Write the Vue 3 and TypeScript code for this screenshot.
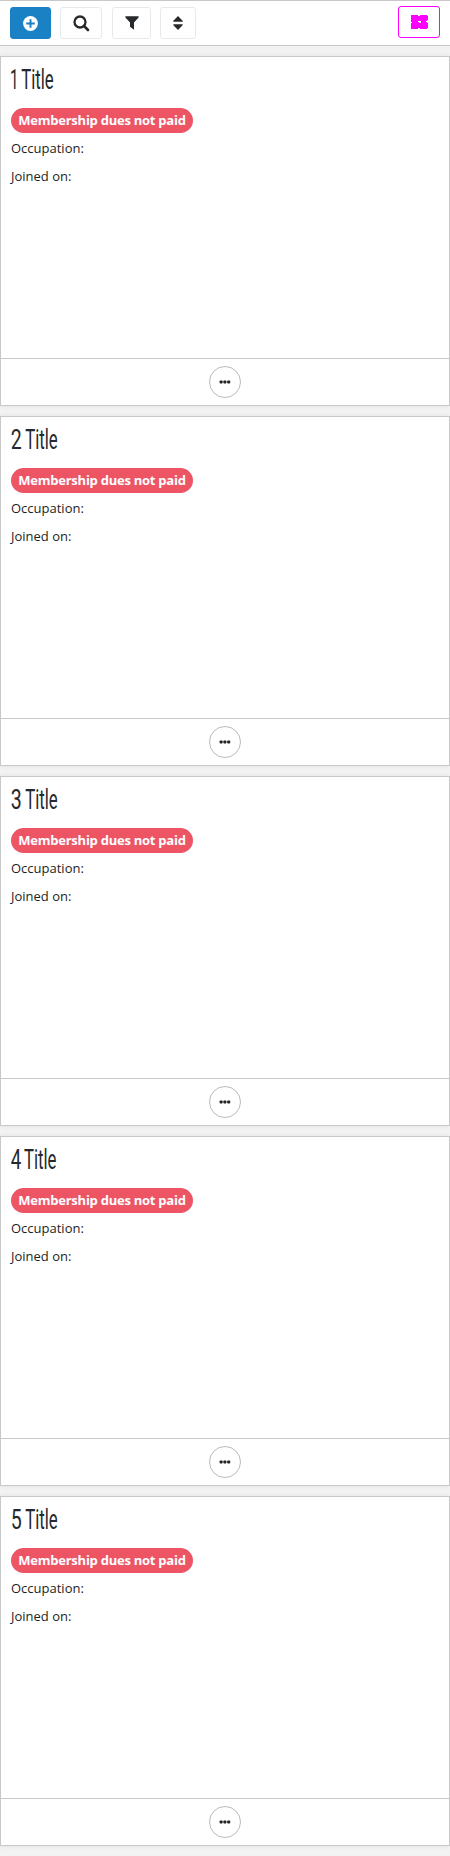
<script setup lang="ts">
interface Card {
  id: number
  digitX: number
  digitWidth: number
  wordX: number
}

const cards: Card[] = [
  { id: 1, digitX: -1, digitWidth: 8.5, wordX: 10.2 },
  { id: 2, digitX: -0.3, digitWidth: 11, wordX: 14.2 },
  { id: 3, digitX: -0.3, digitWidth: 11, wordX: 14.2 },
  { id: 4, digitX: -0.3, digitWidth: 10.5, wordX: 13 },
  { id: 5, digitX: -0.3, digitWidth: 11, wordX: 14.2 },
]
</script>

<template>
  <div class="page">
    <header class="toolbar">
      <button class="btn add" aria-label="Add">
        <svg width="15" height="15" viewBox="0 0 15 15">
          <circle cx="7.5" cy="7.5" r="7.4" fill="#fff" />
          <path d="M7.5 3.2v8.6M3.2 7.5h8.6" stroke="#1b81c5" stroke-width="2" />
        </svg>
      </button>
      <button class="btn search" aria-label="Search">
        <svg width="17" height="17" viewBox="0 0 17 17" fill="none" stroke="#27292a">
          <circle cx="7" cy="7" r="5.5" stroke-width="2.3" />
          <path d="M11 11l4 4" stroke-width="2.6" stroke-linecap="round" />
        </svg>
      </button>
      <button class="btn filter" aria-label="Filter">
        <svg width="14" height="14" viewBox="0 0 14 14">
          <path d="M.4 .3h13.2v1.3L9 6.4v7.3L5 10.7V6.4L.4 1.6z" fill="#27292a" />
        </svg>
      </button>
      <button class="btn sort" aria-label="Sort">
        <svg width="10" height="14" viewBox="0 0 10 14">
          <path d="M5 0l4.6 4.8q.6 1-.5 1H.9q-1.1 0-.5-1zM5 14L.4 9.2q-.6-1 .5-1h8.2q1.1 0 .5 1z" fill="#27292a" />
        </svg>
      </button>
      <button class="btn view" aria-label="Change view">
        <svg width="18" height="14" viewBox="-1 0 18 14" shape-rendering="crispEdges">
          <path
            fill="#f0f"
            fill-rule="evenodd"
            d="M0 0h7v1h2V0h7v1h1v4h-1v1h-1v1h1v1h1v5h-1v1H9v-1H7v1H0V8h1V7H0zM7 6v1h1v1h2V6z"
          />
        </svg>
      </button>
    </header>

    <main class="cards">
      <article v-for="card in cards" :key="card.id" class="card">
        <div class="body">
          <svg class="title" width="60" height="36" role="heading">
            <text :x="card.digitX" y="27" :textLength="card.digitWidth" lengthAdjust="spacingAndGlyphs">{{ card.id }}</text>
            <text :x="card.wordX" y="27" textLength="32.5" lengthAdjust="spacingAndGlyphs">Title</text>
          </svg>
          <div class="badge">Membership dues not paid</div>
          <p class="field">Occupation:</p>
          <p class="field">Joined on:</p>
        </div>
        <footer class="footer">
          <button class="more" aria-label="More">
            <svg width="12" height="4" viewBox="0 0 12 4" fill="#202224">
              <rect x=".6" y=".5" width="3" height="3" rx=".8" />
              <rect x="4.4" y=".5" width="3" height="3" rx=".8" />
              <rect x="8.2" y=".5" width="3" height="3" rx=".8" />
            </svg>
          </button>
        </footer>
      </article>
    </main>
  </div>
</template>

<style>
body {
  background: #f2f2f2;
}
</style>

<style scoped>
.page {
  height: 1856px;
  background: #f2f2f2;
  color: #1c1f22;
  font-family: "Open Sans", sans-serif;
  font-size: 13px;
  overflow: hidden;
}

.page * {
  box-sizing: border-box;
}

.toolbar {
  display: flex;
  align-items: flex-start;
  height: 46px;
  padding: 6px 10px 0;
  background: #fff;
  border-top: 1px solid #c8c8c8;
  border-bottom: 1px solid #c8c8c8;
}

.btn {
  display: flex;
  align-items: center;
  justify-content: center;
  height: 32px;
  padding: 0;
  background: #fff;
  border: 1px solid #e7eaec;
  border-radius: 3px;
}

.add {
  width: 41px;
  background: #1b81c5;
  border-color: #1b81c5;
}

.search {
  width: 42px;
  margin-left: 9px;
}

.filter {
  width: 39px;
  margin-left: 10px;
}

.sort {
  width: 36px;
  margin-left: 9px;
}

.view {
  width: 42px;
  margin-top: -1px;
  margin-left: auto;
  border-color: #f0f;
}

.cards {
  display: flex;
  flex-direction: column;
  gap: 10px;
  padding-top: 10px;
}

.card {
  display: flex;
  flex-direction: column;
  height: 350px;
  background: #fff;
  border: 1px solid #c8c8c8;
  box-shadow: 0 0 5px rgba(0, 0, 0, 0.07);
}

.body {
  flex: 1;
  padding: 5px 10px 0;
}

.title {
  display: block;
  overflow: visible;
  fill: #26292c;
  font-family: Roboto, sans-serif;
  font-size: 27px;
  font-weight: 400;
}

.badge {
  width: 182px;
  height: 25px;
  margin: 10px 0 2px;
  border-radius: 13px;
  background: #ed5565;
  color: #fff;
  font-weight: 700;
  letter-spacing: -0.25px;
  line-height: 25px;
  text-align: center;
  white-space: nowrap;
}

.field {
  height: 28px;
  margin: 0;
  line-height: 26px;
}

.footer {
  display: flex;
  align-items: center;
  justify-content: center;
  height: 47px;
  border-top: 1px solid #c8c8c8;
}

.more {
  display: flex;
  align-items: center;
  justify-content: center;
  width: 32px;
  height: 32px;
  padding: 0;
  background: #fff;
  border: 1px solid #bbb;
  border-radius: 50%;
}
</style>
